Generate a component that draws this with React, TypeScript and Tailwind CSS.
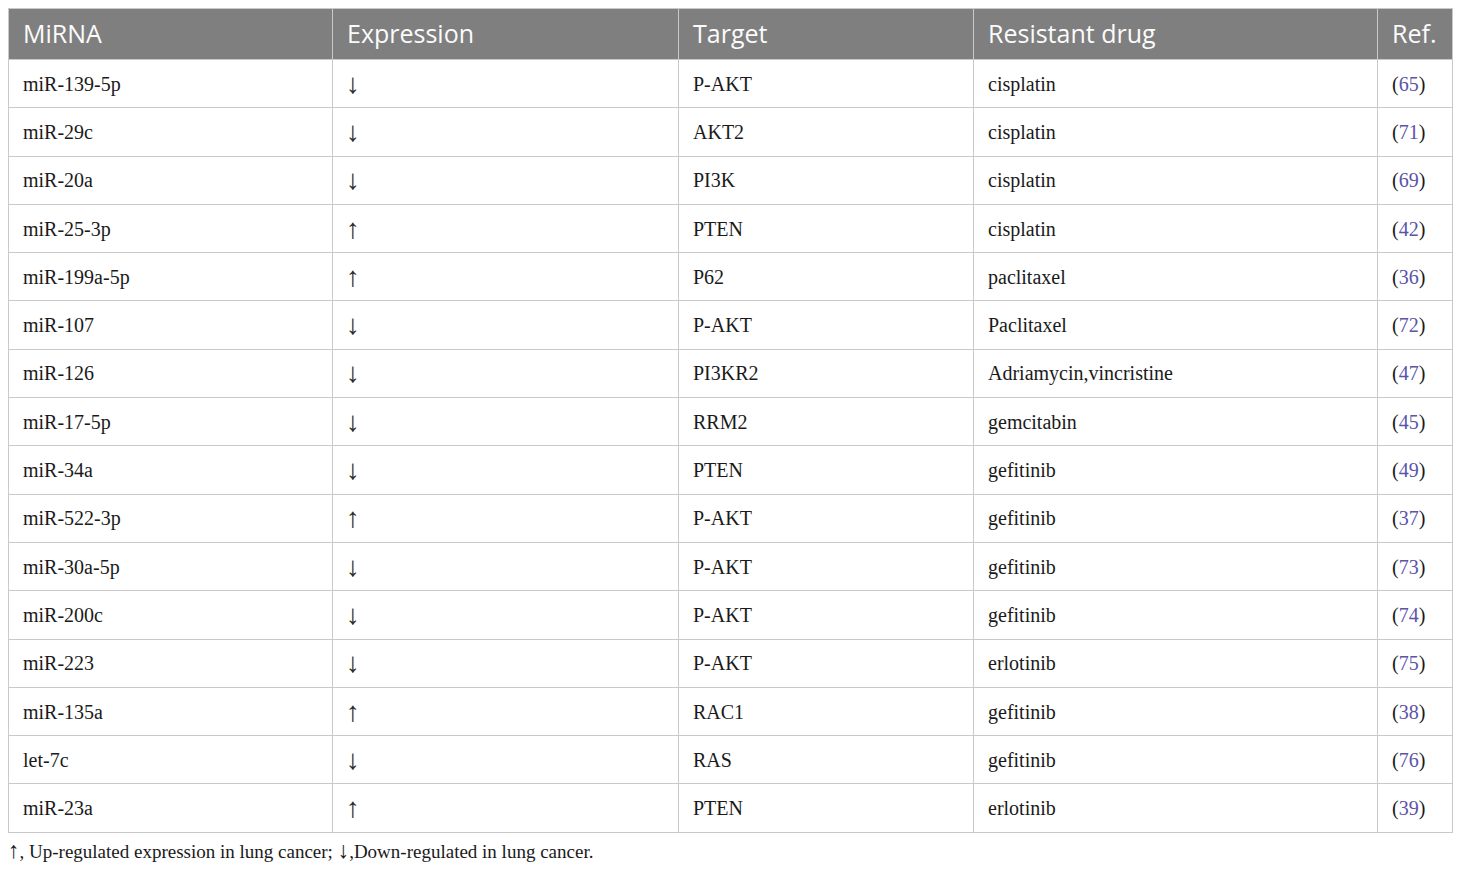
import React from "react";

const rows: [string, string, string, string, string][] = [
  ["miR-139-5p", "↓", "P-AKT", "cisplatin", "65"],
  ["miR-29c", "↓", "AKT2", "cisplatin", "71"],
  ["miR-20a", "↓", "PI3K", "cisplatin", "69"],
  ["miR-25-3p", "↑", "PTEN", "cisplatin", "42"],
  ["miR-199a-5p", "↑", "P62", "paclitaxel", "36"],
  ["miR-107", "↓", "P-AKT", "Paclitaxel", "72"],
  ["miR-126", "↓", "PI3KR2", "Adriamycin,vincristine", "47"],
  ["miR-17-5p", "↓", "RRM2", "gemcitabin", "45"],
  ["miR-34a", "↓", "PTEN", "gefitinib", "49"],
  ["miR-522-3p", "↑", "P-AKT", "gefitinib", "37"],
  ["miR-30a-5p", "↓", "P-AKT", "gefitinib", "73"],
  ["miR-200c", "↓", "P-AKT", "gefitinib", "74"],
  ["miR-223", "↓", "P-AKT", "erlotinib", "75"],
  ["miR-135a", "↑", "RAC1", "gefitinib", "38"],
  ["let-7c", "↓", "RAS", "gefitinib", "76"],
  ["miR-23a", "↑", "PTEN", "erlotinib", "39"],
];

const serif = { fontFamily: '"Liberation Serif", "Times New Roman", serif' };

export default function App() {
  return (
    <div className="bg-white w-[1460px] h-[869px] pt-[8px] pl-[8px]">
      <table className="border-collapse w-[1444px] table-fixed">
        <colgroup>
          <col className="w-[324px]" />
          <col className="w-[346px]" />
          <col className="w-[295px]" />
          <col className="w-[404px]" />
          <col className="w-[75px]" />
        </colgroup>
        <thead>
          <tr className="h-[51px] bg-[#7f7f7f]">
            {["MiRNA", "Expression", "Target", "Resistant drug", "Ref."].map((h) => (
              <th
                key={h}
                className="text-left font-normal text-[#fbfbfb] text-[25px] px-[14px] pb-[2px] border border-[#c9c9c9] [font-family:'Open_Sans',sans-serif] leading-none"
              >
                {h}
              </th>
            ))}
          </tr>
        </thead>
        <tbody style={serif}>
          {rows.map((r) => (
            <tr key={r[0]} className="h-[48.3px]">
              <td className="px-[14px] border border-[#c9c9c9] text-[20px] text-[#1a1a1a] leading-none">{r[0]}</td>
              <td className="px-[13px] border border-[#c9c9c9] text-[20px] text-[#1a1a1a] leading-none">
                <span className="text-[28px] leading-none text-[#2a2a2a]">{r[1]}</span>
              </td>
              <td className="px-[14px] border border-[#c9c9c9] text-[20px] text-[#1a1a1a] leading-none">{r[2]}</td>
              <td className="px-[14px] border border-[#c9c9c9] text-[20px] text-[#1a1a1a] leading-none">{r[3]}</td>
              <td className="px-[14px] border border-[#c9c9c9] text-[20px] text-[#1a1a1a] leading-none">
                (<span className="text-[#5b54a8]">{r[4]}</span>)
              </td>
            </tr>
          ))}
        </tbody>
      </table>
      <p className="mt-[6px] text-[19px] text-[#1a1a1a] leading-[22px]" style={serif}>
        <span className="text-[23px] leading-none">↑</span>, Up-regulated expression in lung cancer;{" "}
        <span className="text-[23px] leading-none">↓</span>,Down-regulated in lung cancer.
      </p>
    </div>
  );
}
